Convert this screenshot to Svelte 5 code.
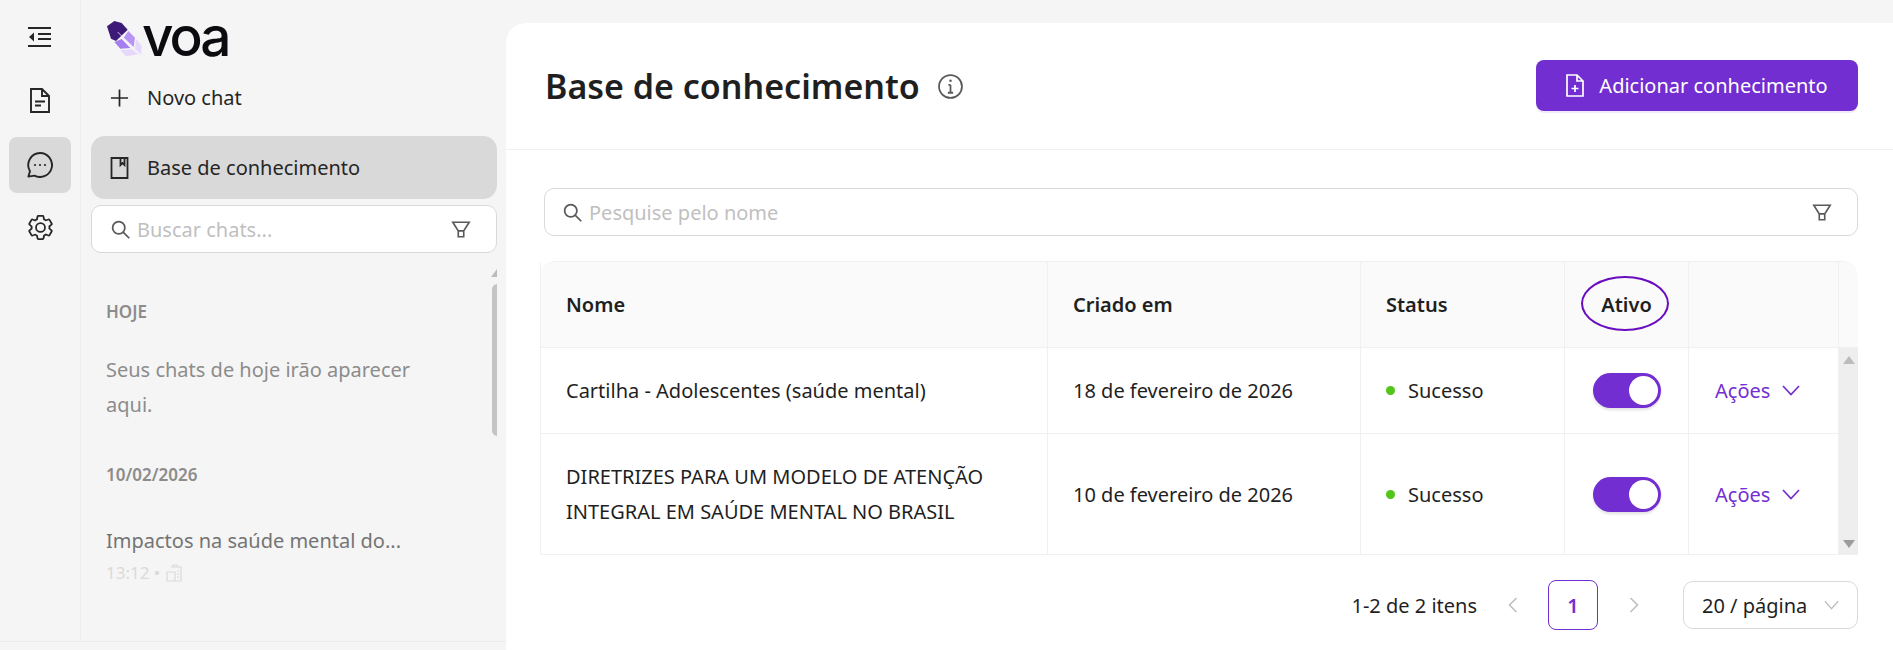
<script lang="ts">
	type Row = { name: string[]; date: string; tall?: boolean };

	const rows: Row[] = [
		{ name: ['Cartilha - Adolescentes (saúde mental)'], date: '18 de fevereiro de 2026' },
		{
			name: ['DIRETRIZES PARA UM MODELO DE ATENÇÃO', 'INTEGRAL EM SAÚDE MENTAL NO BRASIL'],
			date: '10 de fevereiro de 2026',
			tall: true
		}
	];
</script>

{#snippet searchIcon()}
	<svg class="ic-search" viewBox="0 0 24 24" fill="none" stroke="currentColor" stroke-width="2">
		<circle cx="10" cy="10" r="7" />
		<path d="M15 15l7 7" />
	</svg>
{/snippet}

{#snippet filterIcon()}
	<svg class="ic-filter" viewBox="0 0 22 20" fill="none" stroke="currentColor" stroke-width="1.8">
		<path d="M2 2h18l-6 9.5H8zM8 11.5V18h6v-6.5" />
	</svg>
{/snippet}

<div class="page">
	<div class="left">
		<nav class="rail">
			<button class="rail-btn collapse" aria-label="Recolher">
				<svg viewBox="0 0 24 22" fill="currentColor">
					<rect x="0" y="0" width="23" height="2" />
					<rect x="10" y="6" width="13" height="2" />
					<rect x="10" y="11" width="13" height="2" />
					<rect x="0" y="18" width="23" height="2" />
					<path d="M6 5.5v9l-5-4.5z" />
				</svg>
			</button>
			<button class="rail-btn doc" aria-label="Documentos">
				<svg viewBox="0 0 20 25" fill="none" stroke="currentColor" stroke-width="1.9">
					<path d="M1 1h11l7 7v16H1zM12 1v7h7" />
					<path d="M5 13.5h10M5 17.5h6" />
				</svg>
			</button>
			<button class="rail-btn chat active" aria-label="Chat">
				<svg viewBox="0 0 26 26" fill="none" stroke="currentColor" stroke-width="1.9">
					<path d="M13 1a12 12 0 1 1-5.6 22.6L1.4 24.6l1.6-5.4A12 12 0 0 1 13 1z" stroke-linejoin="round" />
					<circle cx="8" cy="13" r="1.1" fill="currentColor" stroke="none" />
					<circle cx="13" cy="13" r="1.1" fill="currentColor" stroke="none" />
					<circle cx="18" cy="13" r="1.1" fill="currentColor" stroke="none" />
				</svg>
			</button>
			<button class="rail-btn gear" aria-label="Configurações">
				<svg viewBox="2 2 28 28" fill="currentColor">
					<path d="M27,16.76c0-.25,0-.5,0-.76s0-.51,0-.77l1.92-1.68A2,2,0,0,0,29.3,11L26.94,7a2,2,0,0,0-1.73-1,2,2,0,0,0-.64.1l-2.43.82a11.35,11.35,0,0,0-1.31-.75l-.51-2.52a2,2,0,0,0-2-1.61H13.64a2,2,0,0,0-2,1.61l-.51,2.52a11.48,11.48,0,0,0-1.32.75L7.43,6.06A2,2,0,0,0,6.79,6,2,2,0,0,0,5.06,7L2.7,11a2,2,0,0,0,.41,2.51L5,15.24c0,.25,0,.5,0,.76s0,.51,0,.77L3.11,18.45A2,2,0,0,0,2.7,21L5.06,25a2,2,0,0,0,1.73,1,2,2,0,0,0,.64-.1l2.43-.82a11.35,11.35,0,0,0,1.31.75l.51,2.52a2,2,0,0,0,2,1.61h4.72a2,2,0,0,0,2-1.61l.51-2.52a11.48,11.48,0,0,0,1.32-.75l2.42.82a2,2,0,0,0,.64.1,2,2,0,0,0,1.73-1L29.3,21a2,2,0,0,0-.41-2.51ZM25.21,24l-3.43-1.16a8.86,8.86,0,0,1-2.71,1.57L18.36,28H13.64l-.71-3.55a9.36,9.36,0,0,1-2.7-1.57L6.79,24,4.43,20l2.72-2.4a8.9,8.9,0,0,1,0-3.13L4.43,12,6.79,8l3.43,1.16a8.86,8.86,0,0,1,2.71-1.57L13.64,4h4.72l.71,3.55a9.36,9.36,0,0,1,2.7,1.57L25.21,8,27.57,12l-2.72,2.4a8.9,8.9,0,0,1,0,3.13L27.57,20Z" />
					<path d="M16,22a6,6,0,1,1,6-6A5.94,5.94,0,0,1,16,22Zm0-10a3.91,3.91,0,0,0-4,4,3.91,3.91,0,0,0,4,4,3.91,3.91,0,0,0,4-4A3.91,3.91,0,0,0,16,12Z" />
				</svg>
			</button>
		</nav>

		<aside class="sidebar">
			<div class="logo">
				<svg viewBox="312 66 120 120" aria-hidden="true">
					<polygon fill="#3d1a78" points="318,88 340,72 362,78 380,98 345,132 330,125" />
					<polygon fill="#b794f6" points="382,102 402,122 398,150 368,122" />
					<polygon fill="#a57ef0" points="340,135 362,126 388,153 358,155" />
					<polygon fill="#e5d8fc" points="405,125 422,148 420,172 402,155" />
					<polygon fill="#e5d8fc" points="358,160 392,157 412,172 375,178" />
					<path d="M350 105L425 180" stroke="#f0e8ff" stroke-width="2.5" />
				</svg>
				<span>voa</span>
			</div>
			<button class="menu-item">
				<svg class="ic-menu" viewBox="0 0 20 20" fill="none" stroke="currentColor" stroke-width="1.8">
					<path d="M10 1v18M1 10h18" />
				</svg>
				Novo chat
			</button>
			<button class="menu-item selected">
				<svg class="ic-menu" viewBox="0 0 18 22" fill="none" stroke="currentColor" stroke-width="1.8">
					<path d="M1 1h16v20H1zM10 1v7l2-2 2 2V1" />
				</svg>
				Base de conhecimento
			</button>
			<div class="side-search">
				{@render searchIcon()}
				<span class="placeholder">Buscar chats...</span>
				{@render filterIcon()}
			</div>

			<div class="history">
				<div class="hist-scroll">
					<span class="arrow up"></span>
					<span class="thumb"></span>
				</div>
				<h4>HOJE</h4>
				<p class="empty">Seus chats de hoje irão aparecer aqui.</p>
				<h4 class="second">10/02/2026</h4>
				<div class="chat-title">Impactos na saúde mental do...</div>
				<div class="chat-meta">
					13:12 •
					<svg viewBox="0 0 18 18" fill="none" stroke="currentColor" stroke-width="1.2">
						<path d="M6 3h10v14H2V8h8v9M8 3V1h4v2M12 7h2M12 10h2M12 13h2" />
					</svg>
				</div>
				<div class="fade"></div>
			</div>
		</aside>
	</div>

	<main class="panel">
		<header class="head">
			<div class="title">
				<h1>Base de conhecimento</h1>
				<svg class="ic-info" viewBox="0 0 24 24" fill="none" stroke="currentColor" stroke-width="1.7">
					<circle cx="12" cy="12" r="11" />
					<path d="M12 10.5V18M9.5 18h5M10 10.5h2" />
					<circle cx="12" cy="6.5" r="1.2" fill="currentColor" stroke="none" />
				</svg>
			</div>
			<button class="primary">
				<svg viewBox="0 0 18 23" fill="none" stroke="currentColor" stroke-width="1.7">
					<path d="M1 1h10l6 6v15H1zM11 1v6h6M9 11v7M5.5 14.5h7" />
				</svg>
				Adicionar conhecimento
			</button>
		</header>

		<div class="content">
			<div class="search">
				{@render searchIcon()}
				<span class="placeholder">Pesquise pelo nome</span>
				{@render filterIcon()}
			</div>

			<div class="table">
				<div class="row thead">
					<div class="cell">Nome</div>
					<div class="cell">Criado em</div>
					<div class="cell">Status</div>
					<div class="cell center">
						Ativo
						<span class="ring"></span>
					</div>
					<div class="cell"></div>
					<div class="cell spacer"></div>
				</div>
				<div class="tbody">
					<div class="rows">
						{#each rows as row}
							<div class="row" class:tall={row.tall}>
								<div class="cell name">
									{#each row.name as line}
										<span>{line}</span>
									{/each}
								</div>
								<div class="cell">{row.date}</div>
								<div class="cell status"><i></i>Sucesso</div>
								<div class="cell center">
									<span class="toggle"><b></b></span>
								</div>
								<div class="cell actions">
									Ações
									<svg viewBox="0 0 18 11" fill="none" stroke="currentColor" stroke-width="1.7">
										<path d="M1 1l8 8.5L17 1" />
									</svg>
								</div>
							</div>
						{/each}
					</div>
					<div class="bar">
						<span class="arrow up"></span>
						<span class="arrow down"></span>
					</div>
				</div>
			</div>

			<div class="pager">
				<span class="count">1-2 de 2 itens</span>
				<svg class="chev" viewBox="0 0 10 16" fill="none" stroke="currentColor" stroke-width="1.6">
					<path d="M9 1L2 8l7 7" />
				</svg>
				<span class="page-num">1</span>
				<svg class="chev" viewBox="0 0 10 16" fill="none" stroke="currentColor" stroke-width="1.6">
					<path d="M1 1l7 7-7 7" />
				</svg>
				<div class="size">
					20 / página
					<svg viewBox="0 0 16 10" fill="none" stroke="currentColor" stroke-width="1.4">
						<path d="M1 1l7 8 7-8" />
					</svg>
				</div>
			</div>
		</div>
	</main>
</div>

<style>
	:global(body) {
		margin: 0;
		background: #f5f5f5;
		overflow: hidden;
	}

	.page {
		display: flex;
		width: 1893px;
		height: 650px;
		overflow: hidden;
		font-family: 'Noto Sans', 'Liberation Sans', sans-serif;
		font-size: 20px;
		color: #1f1f1f;
	}

	button {
		border: 0;
		background: none;
		font: inherit;
		color: inherit;
		padding: 0;
	}

	.left {
		display: flex;
		width: 506px;
		height: 641px;
		flex: none;
		border-bottom: 1px solid #ececec;
		box-sizing: content-box;
	}

	.rail {
		width: 80px;
		flex: none;
		border-right: 1px solid #ededed;
		display: flex;
		flex-direction: column;
		align-items: center;
		padding-top: 27px;
		box-sizing: content-box;
	}

	.rail-btn {
		display: flex;
		align-items: center;
		justify-content: center;
		color: #262626;
		width: 62px;
	}

	.collapse {
		height: 22px;
		margin-bottom: 38px;
	}
	.collapse svg {
		width: 24px;
		height: 22px;
	}
	.doc {
		height: 26px;
		margin-bottom: 24px;
	}
	.doc svg {
		width: 20px;
		height: 25px;
	}
	.chat {
		height: 56px;
		margin-left: 0;
		margin-bottom: 22px;
		border-radius: 8px;
	}
	.chat svg {
		width: 26px;
		height: 26px;
	}
	.active {
		background: #d9d9d9;
	}
	.gear svg {
		width: 25px;
		height: 25px;
	}

	.sidebar {
		position: relative;
		width: 425px;
		flex: none;
		display: flex;
		flex-direction: column;
		padding: 0 9px 0 10px;
		box-sizing: border-box;
	}

	.logo {
		display: flex;
		align-items: center;
		height: 50px;
		margin: 16px 0 0 14px;
		gap: 0;
	}
	.logo svg {
		width: 40px;
		height: 40px;
		margin-top: -4px;
	}
	.logo span {
		font-family: 'Inter', sans-serif;
		font-size: 55px;
		font-weight: 500;
		letter-spacing: -3px;
		line-height: 50px;
		color: #0b0b10;
		margin: -10px 0 0 -3px;
	}

	.menu-item {
		display: flex;
		align-items: center;
		gap: 18px;
		height: 63px;
		padding-left: 19px;
		border-radius: 14px;
		color: #262626;
		text-align: left;
	}
	.ic-menu {
		width: 19px;
		height: 22px;
		flex: none;
	}
	.selected {
		background: #d9d9d9;
		margin-top: 7px;
	}
	.side-search,
	.search {
		display: flex;
		align-items: center;
		background: #fff;
		border: 1px solid #d9d9d9;
		border-radius: 10px;
		box-sizing: border-box;
		color: #595959;
	}
	.side-search {
		height: 48px;
		margin-top: 6px;
		padding: 0 25px 0 18px;
	}
	.ic-search {
		width: 21px;
		height: 21px;
		flex: none;
	}
	.ic-filter {
		width: 20px;
		height: 19px;
		flex: none;
		margin-left: auto;
	}
	.placeholder {
		color: #bfbfbf;
		margin-left: 6px;
	}

	.history {
		position: relative;
		flex: 1;
		padding: 0 0 0 15px;
		overflow: hidden;
	}
	.hist-scroll {
		position: absolute;
		right: -6px;
		top: 16px;
		width: 12px;
		display: flex;
		flex-direction: column;
		align-items: center;
	}
	.thumb {
		width: 11px;
		height: 152px;
		border-radius: 6px;
		background: #c4c4c4;
		margin-top: 7px;
	}
	.arrow {
		display: block;
		width: 0;
		height: 0;
		border-left: 6px solid transparent;
		border-right: 6px solid transparent;
	}
	.arrow.up {
		border-bottom: 8px solid #bcbcbc;
	}
	.arrow.down {
		border-top: 8px solid #9c9c9c;
	}

	h4 {
		margin: 48px 0 0;
		font-size: 17px;
		font-weight: 600;
		line-height: 22px;
		color: #8c8c8c;
	}
	h4.second {
		margin-top: 42px;
	}
	.empty {
		margin: 29px 0 0;
		width: 340px;
		line-height: 35px;
		color: #8c8c8c;
	}
	.chat-title {
		margin-top: 40px;
		line-height: 30px;
		color: #6e6e6e;
	}
	.chat-meta {
		display: flex;
		align-items: center;
		gap: 5px;
		font-size: 17px;
		line-height: 26px;
		margin-top: 4px;
		color: #d4d4d4;
	}
	.chat-meta svg {
		width: 18px;
		height: 18px;
	}
	.fade {
		position: absolute;
		left: 0;
		right: 0;
		bottom: 0;
		height: 110px;
		background: linear-gradient(rgba(245, 245, 245, 0), rgba(245, 245, 245, 0.45));
	}

	.panel {
		flex: 1;
		margin-top: 23px;
		background: #fff;
		border-top-left-radius: 20px;
		display: flex;
		flex-direction: column;
	}
	.head {
		display: flex;
		align-items: center;
		justify-content: space-between;
		height: 126px;
		padding: 0 35px 0 39px;
		border-bottom: 1px solid #f0f0f0;
	}
	.title {
		display: flex;
		align-items: center;
		gap: 18px;
	}
	h1 {
		margin: 0;
		font-size: 34px;
		font-weight: 600;
		line-height: 44px;
		color: #1f1f1f;
	}
	.ic-info {
		width: 25px;
		height: 25px;
		color: #595959;
	}
	.primary {
		display: flex;
		align-items: center;
		gap: 15px;
		width: 322px;
		height: 51px;
		justify-content: center;
		background: #722ed1;
		color: #fff;
		border-radius: 8px;
		margin-bottom: 1px;
		box-shadow: 0 2px 0 rgba(114, 46, 209, 0.1);
	}
	.primary svg {
		width: 18px;
		height: 23px;
	}

	.content {
		padding: 38px 35px 0 38px;
	}
	.search {
		height: 48px;
		padding: 0 25px 0 17px;
		width: 1314px;
	}

	.table {
		margin-top: 25px;
		width: 1318px;
		margin-left: -4px;
		border-top: 1px solid #f0f0f0;
		border-radius: 16px 16px 0 0;
	}
	.row {
		display: grid;
		grid-template-columns: 508px 313px 204px 124px 150px;
		border-bottom: 1px solid #f0f0f0;
		height: 86px;
		box-sizing: border-box;
	}
	.thead {
		grid-template-columns: 508px 313px 204px 124px 150px 19px;
		background: #fafafa;
		border-radius: 16px 16px 0 0;
		font-weight: 600;
		color: #1f1f1f;
	}
	.cell {
		position: relative;
		display: flex;
		align-items: center;
		padding: 0 25px;
		border-right: 1px solid #f0f0f0;
		min-width: 0;
	}
	.cell.center {
		justify-content: center;
		padding: 0;
	}
	.cell.spacer {
		padding: 0;
		border: 0;
	}
	.row .cell:first-child {
		border-left: 1px solid #f0f0f0;
	}
	.ring {
		position: absolute;
		left: 16px;
		top: 14px;
		width: 88px;
		height: 55px;
		border: 2.5px solid #6a0dc0;
		border-radius: 50%;
		box-sizing: border-box;
	}
	.tbody {
		display: flex;
	}
	.rows {
		width: 1299px;
	}
	.tbody .row {
		height: 86px;
	}
	.tbody .row.tall {
		height: 121px;
	}
	.name {
		flex-direction: column;
		align-items: flex-start;
		justify-content: center;
		line-height: 35px;
		white-space: nowrap;
	}
	.status i {
		width: 9px;
		height: 9px;
		border-radius: 50%;
		background: #52c41a;
		margin-right: 13px;
		flex: none;
	}
	.toggle {
		display: block;
		position: relative;
		width: 68px;
		height: 35px;
		border-radius: 18px;
		background: #722ed1;
		box-shadow: 0 2px 3px rgba(0, 0, 0, 0.12);
	}
	.toggle b {
		position: absolute;
		right: 3px;
		top: 3px;
		width: 29px;
		height: 29px;
		border-radius: 50%;
		background: #fff;
	}
	.actions {
		color: #722ed1;
		gap: 12px;
		padding-left: 26px;
	}
	.actions svg {
		width: 18px;
		height: 11px;
	}
	.bar {
		width: 19px;
		background: #eeeeee;
		display: flex;
		flex-direction: column;
		justify-content: space-between;
		align-items: center;
		padding: 8px 0 6px;
		border-bottom: 1px solid #f0f0f0;
		box-sizing: border-box;
	}

	.pager {
		display: flex;
		align-items: center;
		justify-content: flex-end;
		margin-top: 25px;
		margin-right: 0;
		height: 50px;
	}
	.count {
		margin-right: 30px;
	}
	.chev {
		width: 11px;
		height: 16px;
		color: #bfbfbf;
	}
	.page-num {
		display: flex;
		align-items: center;
		justify-content: center;
		width: 50px;
		height: 50px;
		margin: 0 31px 0 30px;
		border: 1px solid #722ed1;
		border-radius: 8px;
		box-sizing: border-box;
		color: #722ed1;
		font-weight: 600;
	}
	.page-num + .chev {
		margin-right: 43px;
	}
	.size {
		display: flex;
		align-items: center;
		justify-content: space-between;
		width: 175px;
		height: 48px;
		padding: 0 18px;
		border: 1px solid #d9d9d9;
		border-radius: 10px;
		box-sizing: border-box;
	}
	.size svg {
		width: 15px;
		height: 10px;
		color: #bfbfbf;
	}
</style>
